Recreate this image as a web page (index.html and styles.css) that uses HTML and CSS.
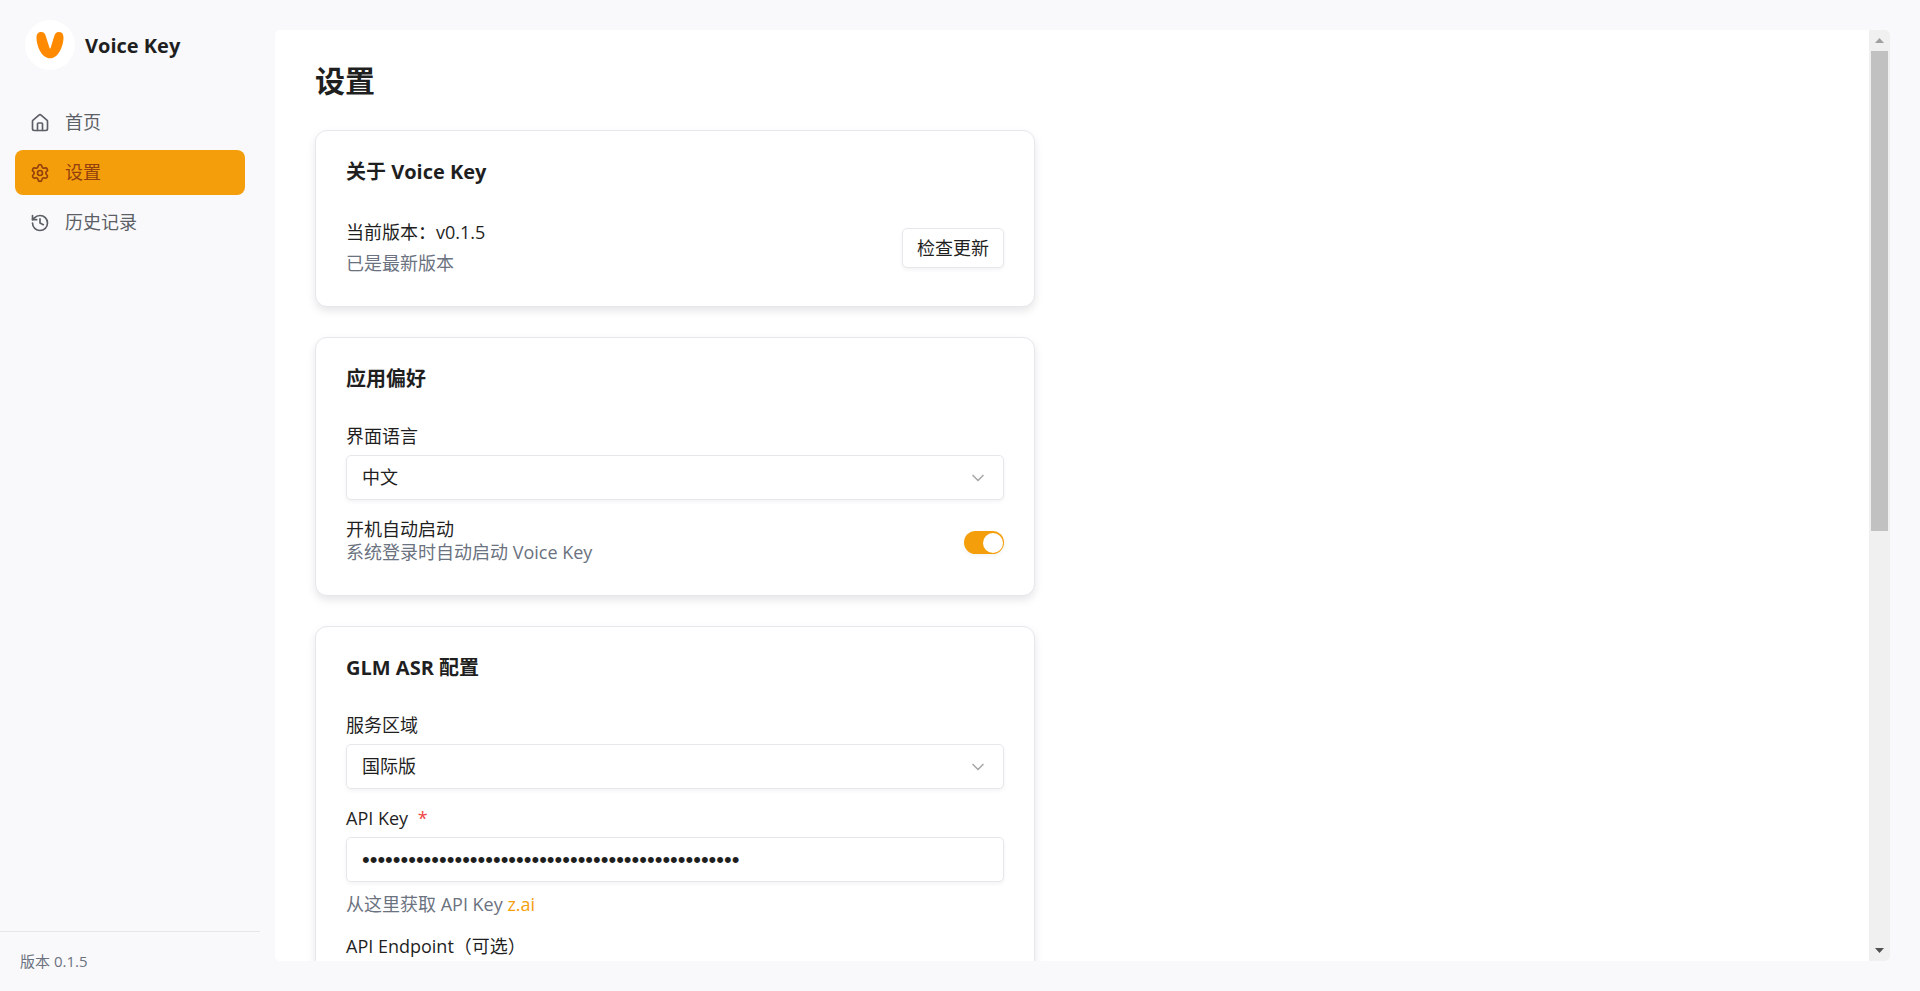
FILE: index.html
```html
<!DOCTYPE html>
<html lang="zh-CN">
  <head>
    <meta charset="UTF-8" />
    <meta name="viewport" content="width=device-width, initial-scale=1.0" />
    <title>Voice Key</title>
    <link rel="stylesheet" href="styles.css">
  </head>
  <body>
    <aside class="sidebar">
      <div class="brand">
        <span class="brand-logo">
          <svg viewBox="0 0 50 50" aria-hidden="true">
            <path d="M11.500 17.5C11.500 13.8 13.500 12 16.200 12C19 12 20.300 14 20.900 16.500L24.600 28C24.900 28.900 25.300 28.900 25.600 28L29.100 16.500C29.800 14 31.100 12 33.900 12C36.700 12 38.500 13.800 38.500 17.5C38.500 26 33.500 38.300 25.200 38.300C16.500 38.300 11.500 26 11.500 17.5Z" />
          </svg>
        </span>
        <span class="brand-name">Voice Key</span>
      </div>

      <nav class="nav">
        <a class="nav-item" href="#home">
          <svg class="icon" viewBox="0 0 24 24" aria-hidden="true">
            <path d="M15 21v-8a1 1 0 0 0-1-1h-4a1 1 0 0 0-1 1v8" />
            <path d="M3 10a2 2 0 0 1 .709-1.528l7-5.999a2 2 0 0 1 2.582 0l7 5.999A2 2 0 0 1 21 10v9a2 2 0 0 1-2 2H5a2 2 0 0 1-2-2z" />
          </svg>
          首页
        </a>
        <a class="nav-item active" href="#settings" aria-current="page">
          <svg class="icon" viewBox="0 0 24 24" aria-hidden="true">
            <path d="M9.671 4.136a2.34 2.34 0 0 1 4.659 0 2.34 2.34 0 0 0 3.319 1.915 2.34 2.34 0 0 1 2.33 4.033 2.34 2.34 0 0 0 0 3.831 2.34 2.34 0 0 1-2.33 4.033 2.34 2.34 0 0 0-3.319 1.915 2.34 2.34 0 0 1-4.659 0 2.34 2.34 0 0 0-3.32-1.915 2.34 2.34 0 0 1-2.33-4.033 2.34 2.34 0 0 0 0-3.831A2.34 2.34 0 0 1 6.35 6.051a2.34 2.34 0 0 0 3.319-1.915" />
            <circle cx="12" cy="12" r="3" />
          </svg>
          设置
        </a>
        <a class="nav-item" href="#history">
          <svg class="icon" viewBox="0 0 24 24" aria-hidden="true">
            <path d="M3 12a9 9 0 1 0 9-9 9.75 9.75 0 0 0-6.74 2.74L3 8" />
            <path d="M3 3v5h5" />
            <path d="M12 7v5l4 2" />
          </svg>
          历史记录
        </a>
      </nav>

      <footer class="sidebar-footer">版本 0.1.5</footer>
    </aside>

    <main class="main">
      <div class="panel">
        <div class="scroll-area">
          <div class="content">
            <h1>设置</h1>

            <section class="card">
              <h2>关于 Voice Key</h2>
              <div class="row">
                <div class="about">
                  <p>当前版本：v0.1.5</p>
                  <p class="muted">已是最新版本</p>
                </div>
                <button class="btn" type="button">检查更新</button>
              </div>
            </section>

            <section class="card">
              <h2>应用偏好</h2>
              <div class="fields">
                <div class="field">
                  <label for="language">界面语言</label>
                  <div class="select">
                    <select id="language">
                      <option>中文</option>
                      <option>English</option>
                    </select>
                    <svg class="icon" viewBox="0 0 24 24" aria-hidden="true"><path d="m6 9 6 6 6-6" /></svg>
                  </div>
                </div>
                <div class="row">
                  <div class="switch-text">
                    <label for="autoLaunch">开机自动启动</label>
                    <p class="muted">系统登录时自动启动 Voice Key</p>
                  </div>
                  <input class="switch" id="autoLaunch" type="checkbox" role="switch" checked />
                </div>
              </div>
            </section>

            <section class="card">
              <h2>GLM ASR 配置</h2>
              <div class="fields">
                <div class="field">
                  <label for="region">服务区域</label>
                  <div class="select">
                    <select id="region">
                      <option>国际版</option>
                      <option>中国版</option>
                    </select>
                    <svg class="icon" viewBox="0 0 24 24" aria-hidden="true"><path d="m6 9 6 6 6-6" /></svg>
                  </div>
                </div>
                <div class="field">
                  <label for="apiKey">API Key <span class="required">*</span></label>
                  <input class="input password" id="apiKey" type="password" value="0000000000000000000000000000000000000000000000000" />
                  <p class="muted">从这里获取 API Key <a href="#z-ai">z.ai</a></p>
                </div>
                <div class="field">
                  <label for="apiEndpoint">API Endpoint（可选）</label>
                  <input class="input" id="apiEndpoint" type="text" />
                </div>
              </div>
            </section>
          </div>
        </div>

        <div class="scrollbar" aria-hidden="true">
          <svg class="arrow arrow-up" viewBox="0 0 9 5"><path d="M0 5 4.500 0 9 5z" /></svg>
          <div class="track"><div class="thumb"></div></div>
          <svg class="arrow" viewBox="0 0 9 5"><path d="M0 0h9L4.500 5z" /></svg>
        </div>
      </div>
    </main>
  </body>
</html>
```
FILE: styles.css
```css
* { box-sizing: border-box; }
body {
  display: flex;
  height: 100vh;
  margin: 0;
  background: #f9f9fb;
  color: #1f1f1f;
  font-family: "Segoe UI", "Open Sans", "Noto Sans CJK SC", sans-serif;
  font-size: 18px;
  line-height: 25px;
}
h1, h2, p { margin: 0; }
input, select, button { font: inherit; color: inherit; }
.icon {
  flex: none;
  width: 20px;
  height: 20px;
  fill: none;
  stroke: currentColor;
  stroke-width: 2;
  stroke-linecap: round;
  stroke-linejoin: round;
}

/* Sidebar */
.sidebar { display: flex; flex-direction: column; flex: none; width: 260px; }
.brand { display: flex; align-items: center; gap: 10px; padding: 20px 25px; }
.brand-logo { width: 50px; height: 50px; border-radius: 50%; background: #fff; }
.brand-logo svg { display: block; fill: #ff8a00; }
.brand-name { font-size: 20px; font-weight: 700; }
.nav { display: flex; flex-direction: column; gap: 5px; flex: 1; padding: 10px 15px; }
.nav-item {
  display: flex;
  align-items: center;
  gap: 15px;
  padding: 10px 15px;
  border-radius: 8px;
  color: #5c5f66;
  text-decoration: none;
}
.nav-item.active { background: #f59e0b; color: #92400e; }
.sidebar-footer {
  padding: 20px;
  border-top: 1px solid #e5e7eb;
  color: #6b7280;
  font-size: 15px;
  line-height: 19px;
}

/* Main panel */
.main { flex: 1; min-width: 0; padding: 30px 30px 30px 15px; }
.panel { display: flex; height: 100%; overflow: hidden; background: #fff; border-radius: 5px; }
.scroll-area { flex: 1; min-width: 0; overflow-y: auto; scrollbar-width: none; }
.content {
  display: flex;
  flex-direction: column;
  gap: 30px;
  max-width: 800px;
  padding: 30px 40px;
}
h1 { margin-bottom: -2px; font-size: 30px; line-height: 42px; }
.card {
  padding: 30px;
  border: 1px solid #e5e7eb;
  border-radius: 12px;
  background: #fff;
  box-shadow: 0 4px 8px rgba(0, 0, 0, 0.1);
}
h2 { margin-bottom: 37px; font-size: 20px; font-weight: 700; line-height: 22px; }
.row { display: flex; align-items: center; justify-content: space-between; }
.muted { color: #6b7280; }
.about { display: flex; flex-direction: column; gap: 6px; }

/* Scrollbar */
.scrollbar {
  display: flex;
  flex-direction: column;
  align-items: center;
  width: 21px;
  background: #f0f0f0;
}
.arrow { width: 9px; height: 21px; fill: #505050; }
.arrow-up { fill: #a0a0a0; }
.track { flex: 1; width: 17px; }
.thumb { height: 54%; background: #c1c1c1; }

/* Form controls */
.fields { display: flex; flex-direction: column; gap: 20px; }
.field { display: flex; flex-direction: column; gap: 10px; }
label { line-height: 18px; }
.switch-text { display: flex; flex-direction: column; gap: 2px; }
.required { margin-left: 5px; color: #ef4444; }
.field a { color: #f59e0b; text-decoration: none; }
.btn, .input, .select select {
  border: 1px solid #e5e7eb;
  border-radius: 5px;
  background: #fff;
  box-shadow: 0 2px 4px rgba(0, 0, 0, 0.05);
}
.btn { height: 40px; padding: 0 14px; }
.input, .select select { width: 100%; height: 45px; padding: 0 15px; }
.password { font-family: "Liberation Sans", Arial, sans-serif; font-size: 22px; }
.select { display: grid; align-items: center; }
.select > * { grid-area: 1 / 1; }
.select select { appearance: none; }
.select .icon { justify-self: end; margin-right: 16px; color: #aaa; pointer-events: none; }
.switch {
  display: flex;
  align-items: center;
  justify-content: flex-end;
  width: 40px;
  height: 23px;
  margin: 0;
  padding: 1px;
  border-radius: 12px;
  background: #d1d5db;
  box-shadow: 0 2px 4px rgba(0, 0, 0, 0.05);
  appearance: none;
}
.switch::before { content: ""; width: 20px; height: 20px; border-radius: 50%; background: #fff; }
.switch:checked { background: #f59e0b; }
.switch:not(:checked) { justify-content: flex-start; }
```
